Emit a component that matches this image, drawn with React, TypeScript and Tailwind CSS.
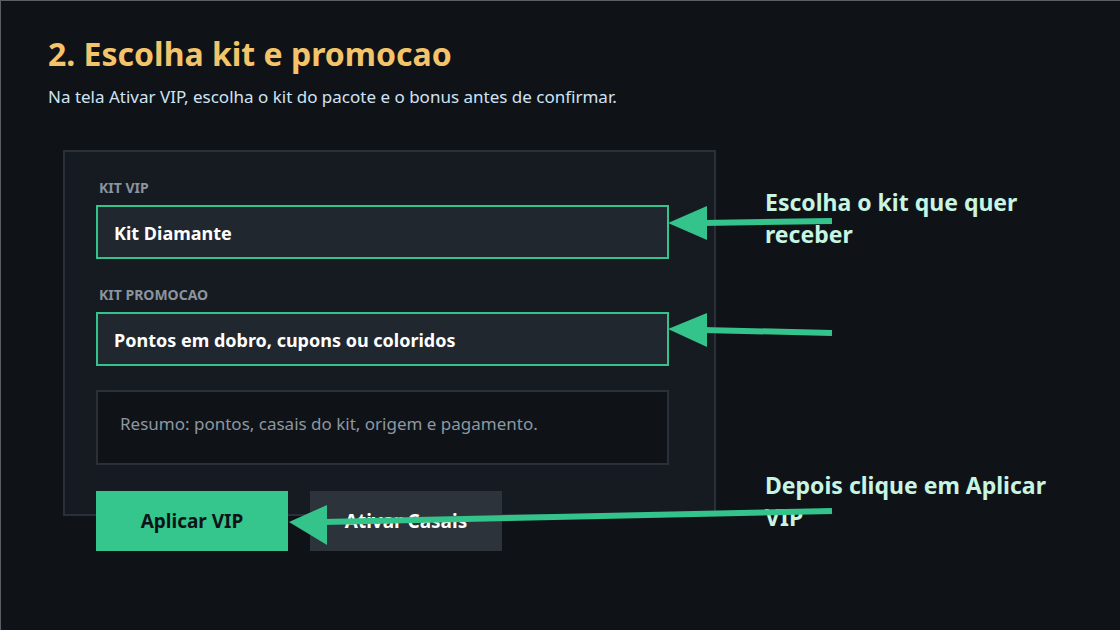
export default function App() {
  const font = { fontFamily: '"Noto Sans", "Open Sans", sans-serif' }

  return (
    <div
      className="relative w-[1120px] h-[630px] overflow-hidden bg-[#0f1318] border-t border-l border-[#5a5f66]"
      style={font}
    >
      <div className="pl-[47px] pt-[33px]">
        <h1 className="text-[32px] leading-[40px] font-bold text-[#f4c46a]">2. Escolha kit e promocao</h1>
        <p className="mt-[11px] text-[17px] leading-[24px] text-[#cfe3f5]">
          Na tela Ativar VIP, escolha o kit do pacote e o bonus antes de confirmar.
        </p>

        {/* painel */}
        <div className="mt-[41px] ml-[15px] w-[653px] h-[366px] bg-[#161b22] border-2 border-[#2a3038] px-[31px] pt-[27px]">
          <div className="ml-[3px] text-[14px] leading-[18px] font-bold text-[#8b949e]">KIT VIP</div>
          <div className="mt-[8px] w-[573px] h-[54px] bg-[#21272e] border-2 border-[#34c48b] flex items-center pl-[16px] pt-[3px]">
            <span className="text-[18px] font-bold text-white">Kit Diamante</span>
          </div>

          <div className="ml-[3px] mt-[27px] text-[14px] leading-[18px] font-bold text-[#8b949e]">KIT PROMOCAO</div>
          <div className="mt-[8px] w-[573px] h-[54px] bg-[#21272e] border-2 border-[#34c48b] flex items-center pl-[16px] pt-[2px]">
            <span className="text-[18px] font-bold text-white">Pontos em dobro, cupons ou coloridos</span>
          </div>

          <div className="mt-[24px] w-[573px] h-[75px] bg-[#0f1318] border-2 border-[#2a3038] flex items-center pl-[22px] pb-[7px]">
            <span className="text-[17px] text-[#8d97a1]">Resumo: pontos, casais do kit, origem e pagamento.</span>
          </div>

          <div className="mt-[26px] flex gap-[22px]">
            <button className="w-[192px] h-[60px] bg-[#34c68c] text-[19px] font-bold text-[#0f1318]">Aplicar VIP</button>
            <button className="w-[192px] h-[60px] bg-[#2d333b] text-[19px] font-bold text-white">Ativar Casais</button>
          </div>
        </div>
      </div>

      {/* anotacoes */}
      <div className="absolute left-[764px] top-[185px] w-[300px] text-[23px] leading-[32px] font-bold text-[#c8f5e1]">
        Escolha o kit que quer receber
      </div>
      <div className="absolute left-[764px] top-[468px] w-[300px] text-[23px] leading-[32px] font-bold text-[#c8f5e1]">
        Depois clique em Aplicar VIP
      </div>

      <svg className="absolute left-0 top-0 pointer-events-none" width="1120" height="630" viewBox="0 0 1120 630">
        <g fill="#34c48b" stroke="#34c48b">
          <line x1="831" y1="220" x2="702" y2="222" strokeWidth="6" />
          <polygon points="667,222 706,205 706,239" stroke="none" />
          <line x1="831" y1="332" x2="702" y2="329" strokeWidth="6" />
          <polygon points="667,328 706,312 706,346" stroke="none" />
          <line x1="831" y1="510" x2="322" y2="521" strokeWidth="6" />
          <polygon points="288,521 326,504 326,544" stroke="none" />
        </g>
      </svg>
    </div>
  )
}
